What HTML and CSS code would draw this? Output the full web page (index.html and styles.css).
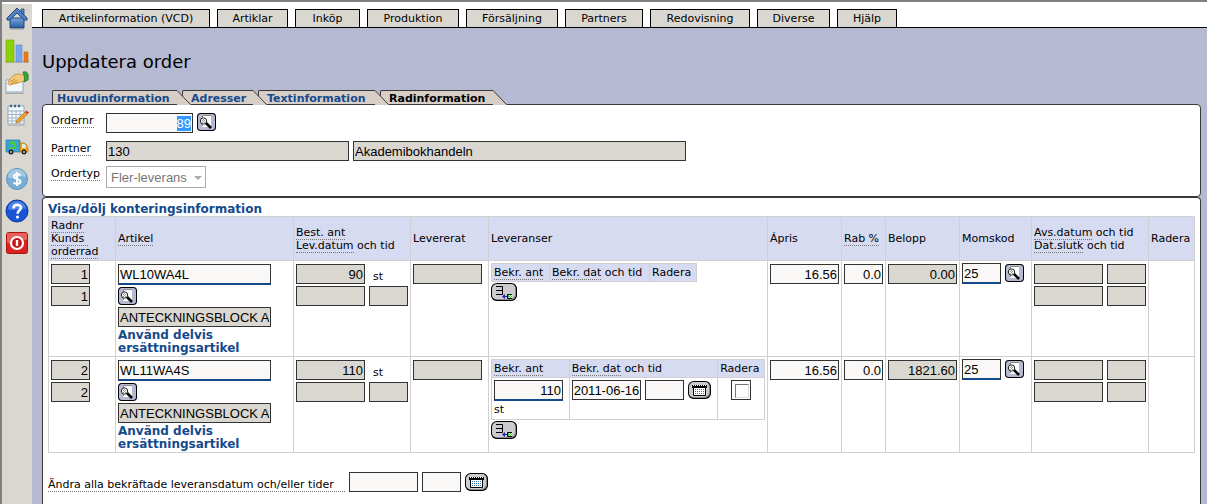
FILE: index.html
```html
<!DOCTYPE html>
<html lang="sv">
<head>
<meta charset="utf-8">
<title>Uppdatera order</title>
<link rel="stylesheet" href="styles.css">
</head>
<body>
<svg class="defs" aria-hidden="true">
  <symbol id="search" viewBox="0 0 19 18">
    <path d="M5 2h9v12H5z" fill="#fff"/><path d="M5.500 13V2.500H14" fill="none" stroke="#888"/>
    <path d="M8.500 9.500l5.500 5.500" stroke="#000" stroke-width="2.600"/>
    <circle cx="6.500" cy="8" r="3.200" fill="#f4f4f4" stroke="#222"/><path d="M5 7h1v1H5zM6 8h1v1H6zM7 7h1v1H7zM5 9h1v1H5zM7 9h1v1H7zM6 6h1v1H6z" fill="#999"/>
  </symbol>
  <symbol id="insert" viewBox="0 0 26 18">
    <path d="M5 3.500h6.500v8H5M5 7.500h6" fill="none" stroke="#000"/>
    <path d="M11 13.500l3-2.500v2h3v1h-3v2z" fill="#22b"/>
    <path d="M17 12h4v3h-4z" fill="#3c3"/><path d="M21 11.500h-4.500v4H21" fill="none" stroke="#000"/>
    <path d="M18 12h1v1h-1zM20 12h1v1h-1zM19 13h1v1h-1zM18 14h1v1h-1zM20 14h1v1h-1z" fill="#fff"/>
  </symbol>
  <symbol id="cal" viewBox="0 0 23 18">
    <path d="M5.500 6v8.500h12V6" fill="#fff" stroke="#000"/><path d="M4 4h15v3H4z" fill="#000"/>
    <path d="M5 4.500h13" stroke="#fff" stroke-dasharray="1 1"/>
    <path d="M7 8.500h9M7 10.500h9M7 12.500h9" stroke="#37a" stroke-dasharray="1 1"/>
  </symbol>
  <symbol id="slant" viewBox="0 0 14 15">
    <path d="M0 0L14 15H0z" fill="#d7cec8"/><path d="M0 .5L13.500 14.500" stroke="#3a3a3a" fill="none"/>
  </symbol>
</svg>
<div class="app">
<aside class="side">
  <a href="#" aria-label="Hem"><svg viewBox="0 0 24 24"><defs><linearGradient id="hb" x2="0" y2="1"><stop stop-color="#78a7dc"/><stop offset="1" stop-color="#285a9e"/></linearGradient></defs><path d="M5 11h14v10H5z" fill="url(#hb)" stroke="#204878"/><path d="M16 2h3v6h-3z" fill="#5c88c0" stroke="#204878" stroke-width=".8"/><path d="M12 1L2 11v2h3l7-7 7 7h3v-2z" fill="#4e82c4" stroke="#204878"/><path d="M5 22h14" stroke="#999"/></svg></a>
  <a href="#" aria-label="Statistik"><svg viewBox="0 0 24 24"><path d="M0 23h24" stroke="#999"/><path d="M1 1h8v22H1z" fill="#8ccf0b" stroke="#70aa09" stroke-width=".6"/><path d="M11 6h6v17h-6z" fill="#79a7ef" stroke="#5b87cc" stroke-width=".6"/><path d="M19 13h4v10h-4z" fill="#ef7b16" stroke="#c8600a" stroke-width=".6"/></svg></a>
  <a href="#" aria-label="Order"><svg viewBox="0 0 24 24"><path d="M1 9h17v12H1z" fill="#f3f7fc" stroke="#8ea6c0"/><path d="M0 22.500h19" stroke="#aaa"/><path d="M3 12c1-4 6-9 10-9l7 1v6l-8 2-7 2c-2 0-2-1-2-2z" fill="#f2c879" stroke="#c88c38" stroke-width=".8"/><path d="M5 11l5-3M6 13l6-4M10 13l3-2" stroke="#c88c38"/><path d="M18 1c4-1 6 1 5 8l-4 2c1-4 0-7-1-10z" fill="#35a63b" stroke="#16741d" stroke-width=".7"/></svg></a>
  <a href="#" aria-label="Planering"><svg viewBox="0 0 24 24"><path d="M3 3h16v18H3z" fill="#f6f9fd" stroke="#91a5bb"/><path d="M3 8h16M3 11.500h16M3 15h16M3 18h16M7 7v14M11 7v14M15 7v14" stroke="#a0b4cc"/><path d="M5 3h2M9 3h2M13 3h2" stroke="#366a86" stroke-width="2.500"/><path d="M12 17l8-8 2.500 2-8 8-3.500 1z" fill="#f1a326" stroke="#a06b15" stroke-width=".6"/><path d="M20 9l1.500-1.500 2.500 2-1.500 1.500z" fill="#d33827"/><path d="M3 22.500h18" stroke="#bbb"/></svg></a>
  <a href="#" aria-label="Leverans"><svg viewBox="0 0 24 24"><path d="M1 5h14v12H1z" fill="#39a3d5" stroke="#267aa8" stroke-width=".7"/><path d="M15 8h4c3 1 4 4 4 9h-8z" fill="#f4a51c" stroke="#b97509" stroke-width=".7"/><path d="M17 9h2c2 1 2 2 2 4h-4z" fill="#d7edf6"/><path d="M11 8a4 3 0 0 0-6 1M5 12a4 3 0 0 0 6 0M11 10H8" fill="none" stroke="#4cd31e" stroke-width="2"/><circle cx="6" cy="17" r="2.500" fill="#222"/><circle cx="19" cy="17" r="2.500" fill="#222"/><circle cx="6" cy="17" r="1" fill="#ccc"/><circle cx="19" cy="17" r="1" fill="#ccc"/></svg></a>
  <a href="#" aria-label="Ekonomi"><svg viewBox="0 0 24 24"><circle cx="12" cy="12" r="10.500" fill="#78aed5" stroke="#6096bd"/><path d="M3 10a9 8 0 0 1 18 0c-6-3-12 4-18 0z" fill="#a3cae4"/><path d="M15.500 8.500C14.500 7 9 6.500 9 9.500c0 3 6.500 2 6.500 5s-6 3-7 .8M12 5v14" fill="none" stroke="#fff" stroke-width="2"/></svg></a>
  <a href="#" aria-label="Hjälp"><svg viewBox="0 0 24 24"><circle cx="12" cy="12" r="11" fill="#1854d3" stroke="#0b3a9d"/><path d="M3 10a9 8 0 0 1 18 0c-6-2-12 3-18 0z" fill="#4b82e8"/><path d="M8.500 9.500c0-5 7.500-4.500 7.500-.8 0 2.500-3.500 2.800-3.500 6" fill="none" stroke="#fff" stroke-width="2.600"/><circle cx="12.500" cy="18" r="1.600" fill="#fff"/></svg></a>
  <a href="#" aria-label="Logga ut"><svg viewBox="0 0 24 24"><rect x="1.500" y="1.500" width="21" height="21" rx="2" fill="#d82320" stroke="#a91411"/><path d="M2 2h20v7c-7 0-12 4-20 3z" fill="#e9605b"/><circle cx="12" cy="12" r="6" fill="#c41512" stroke="#fff" stroke-width="2.200"/><path d="M12 9v6" stroke="#fff" stroke-width="2.400"/></svg></a>
</aside>
<main class="main">
  <nav class="menu">
    <button>Artikelinformation (VCD)</button><button>Artiklar</button><button>Inköp</button><button>Produktion</button><button>Försäljning</button><button>Partners</button><button>Redovisning</button><button>Diverse</button><button>Hjälp</button>
  </nav>
  <div class="content">
    <h1>Uppdatera order</h1>
    <div class="tabs">
      <a href="#" class="tab">Huvudinformation<svg><use href="#slant"/></svg></a>
      <a href="#" class="tab">Adresser<svg><use href="#slant"/></svg></a>
      <a href="#" class="tab">Textinformation<svg><use href="#slant"/></svg></a>
      <a href="#" class="tab current">Radinformation<svg><use href="#slant"/></svg></a>
    </div>
    <section class="panel order">
      <label for="ordernr"><span class="hint">Ordernr</span></label>
      <div class="line"><input id="ordernr" class="w-nr num" value="89" autofocus><button class="icon" aria-label="Sök order"><svg><use href="#search"/></svg></button></div>
      <label for="partner"><span class="hint">Partner</span></label>
      <div class="line"><input id="partner" class="w-partner" value="130" readonly><input class="w-name" value="Akademibokhandeln" aria-label="Partnernamn" readonly></div>
      <label for="typ"><span class="hint">Ordertyp</span></label>
      <div class="line"><div class="pick"><select id="typ" disabled><option>Fler-leverans</option></select></div></div>
    </section>
    <section class="panel rows">
      <a href="#" class="link">Visa/dölj konteringsinformation</a>
      <table class="grid">
        <colgroup><col class="c1"><col class="c2"><col class="c3"><col class="c4"><col class="c5"><col class="c6"><col class="c7"><col class="c8"><col class="c9"><col class="c10"><col class="c11"></colgroup>
        <thead><tr>
          <th><span class="hint">Radnr</span><br><span class="hint">Kunds&nbsp;</span><br><span class="hint">orderrad</span></th>
          <th><span class="hint">Artikel</span></th>
          <th><span class="hint">Best. ant</span><br><span class="hint">Lev.datum</span> och tid</th>
          <th>Levererat</th><th>Leveranser</th><th>Ápris</th>
          <th><span class="hint">Rab %</span></th><th>Belopp</th><th>Momskod</th>
          <th><span class="hint">Avs.datum</span> och tid<br><span class="hint">Dat.slutk</span> och tid</th>
          <th>Radera</th>
        </tr></thead>
        <tbody>
        <tr>
          <td><div class="stack"><input class="w-s num" value="1" aria-label="Radnr" readonly><input class="w-s num" value="1" aria-label="Kunds orderrad" readonly></div></td>
          <td><div class="stack"><input class="w-art req" value="WL10WA4L" aria-label="Artikel"><button class="icon" aria-label="Sök artikel"><svg><use href="#search"/></svg></button><input class="w-art" value="ANTECKNINGSBLOCK A4 LINJERAT" aria-label="Benämning" readonly><a href="#" class="link">Använd delvis ersättningsartikel</a></div></td>
          <td><div class="stack"><div class="line"><input class="w-d num" value="90" aria-label="Best. ant" readonly><span class="unit">st</span></div><div class="line"><input class="w-d" aria-label="Lev.datum" readonly><input class="w-s" aria-label="Lev.tid" readonly></div></div></td>
          <td><div class="stack"><input class="w-d" aria-label="Levererat" readonly></div></td>
          <td><table class="sub short"><tr><th><span class="hint">Bekr. ant</span></th><th><span class="hint">Bekr. dat</span> och tid</th><th>Radera</th></tr></table><button class="icon wide" aria-label="Lägg till leverans"><svg><use href="#insert"/></svg></button></td>
          <td><div class="stack"><input class="w-d num" value="16.56" aria-label="Ápris"></div></td>
          <td><div class="stack"><input class="w-s num" value="0.0" aria-label="Rab %"></div></td>
          <td><div class="stack"><input class="w-d num" value="0.00" aria-label="Belopp" readonly></div></td>
          <td><div class="line"><input class="w-s req" value="25" aria-label="Momskod"><button class="icon low" aria-label="Sök momskod"><svg><use href="#search"/></svg></button></div></td>
          <td><div class="stack"><div class="line"><input class="w-d" aria-label="Avs.datum" readonly><input class="w-s" aria-label="Avs.tid" readonly></div><div class="line"><input class="w-d" aria-label="Dat.slutk" readonly><input class="w-s" aria-label="Tid slutk" readonly></div></div></td>
          <td></td>
        </tr>
        <tr>
          <td><div class="stack"><input class="w-s num" value="2" aria-label="Radnr" readonly><input class="w-s num" value="2" aria-label="Kunds orderrad" readonly></div></td>
          <td><div class="stack"><input class="w-art req" value="WL11WA4S" aria-label="Artikel"><button class="icon" aria-label="Sök artikel"><svg><use href="#search"/></svg></button><input class="w-art" value="ANTECKNINGSBLOCK A4 LINJERAT" aria-label="Benämning" readonly><a href="#" class="link">Använd delvis ersättningsartikel</a></div></td>
          <td><div class="stack"><div class="line"><input class="w-d num" value="110" aria-label="Best. ant" readonly><span class="unit">st</span></div><div class="line"><input class="w-d" aria-label="Lev.datum" readonly><input class="w-s" aria-label="Lev.tid" readonly></div></div></td>
          <td><div class="stack"><input class="w-d" aria-label="Levererat" readonly></div></td>
          <td><table class="sub full"><tr><th><span class="hint">Bekr. ant</span></th><th><span class="hint">Bekr. dat</span> och tid</th><th>Radera</th></tr>
            <tr><td><input class="w-d num req" value="110" aria-label="Bekr. ant"><span class="under">st</span></td>
            <td><div class="line"><input class="w-d" value="2011-06-16" aria-label="Bekr. dat"><input class="w-s" aria-label="Bekr. tid"><button class="icon cal" aria-label="Välj datum"><svg><use href="#cal"/></svg></button></div></td>
            <td><input type="checkbox" aria-label="Radera"></td></tr></table><button class="icon wide" aria-label="Lägg till leverans"><svg><use href="#insert"/></svg></button></td>
          <td><div class="stack"><input class="w-d num" value="16.56" aria-label="Ápris"></div></td>
          <td><div class="stack"><input class="w-s num" value="0.0" aria-label="Rab %"></div></td>
          <td><div class="stack"><input class="w-d num" value="1821.60" aria-label="Belopp" readonly></div></td>
          <td><div class="line"><input class="w-s req" value="25" aria-label="Momskod"><button class="icon low" aria-label="Sök momskod"><svg><use href="#search"/></svg></button></div></td>
          <td><div class="stack"><div class="line"><input class="w-d" aria-label="Avs.datum" readonly><input class="w-s" aria-label="Avs.tid" readonly></div><div class="line"><input class="w-d" aria-label="Dat.slutk" readonly><input class="w-s" aria-label="Tid slutk" readonly></div></div></td>
          <td></td>
        </tr>
        </tbody>
      </table>
      <div class="line all"><label for="alla" class="hint">Ändra alla bekräftade leveransdatum och/eller tider</label><input id="alla" class="w-d"><input class="w-s" aria-label="Tid"><button class="icon cal" aria-label="Välj datum"><svg><use href="#cal"/></svg></button></div>
    </section>
  </div>
</main>
</div>
<script src="app.js"></script>
</body>
</html>
```

FILE: styles.css
```css
* { box-sizing: border-box; }
body {
  margin: 0;
  background: #fff;
  color: #000;
  font: 11px/13px "DejaVu Sans", Verdana, sans-serif;
}
a { text-decoration: none; }
.defs { position: absolute; width: 0; height: 0; }
.app {
  display: flex;
  min-height: 100vh;
  border-top: 2px solid;
  border-left: 2px solid;
  border-color: #808080;
}
.side {
  flex: none;
  width: 30px;
  margin-top: 2px;
  padding: 3px;
  background: #dad7d0;
  display: flex;
  flex-direction: column;
  gap: 8px;
}
.side a, .side svg { display: block; width: 24px; height: 24px; }
.main { flex: 1; min-width: 0; display: flex; flex-direction: column; }
.menu {
  display: grid;
  grid-template-columns: 168px 71px 65px 92px 92px 78px 100px 73px 60px;
  gap: 7px;
  padding: 7px 10px 0;
  border-bottom: 1px solid #000;
}
.menu button {
  height: 18px;
  padding: 0;
  border: 1px solid #000;
  border-bottom: 0;
  background: #dad7d0;
  font: inherit;
  color: #000;
}
.content {
  flex: 1;
  display: flex;
  flex-direction: column;
  padding: 23px 6px 0 10px;
  background: #b5bad2;
}
h1 { margin: 0 0 17px; font-size: 18px; line-height: 22px; font-weight: normal; }
.tabs {
  display: grid;
  grid-template-columns: 125px 71px 117px 113px;
  gap: 5px;
  padding-left: 10px;
}
.tab {
  position: relative;
  height: 14px;
  padding: 1px 0 0 8px;
  border: solid #3a3a3a;
  border-width: 1px 0 0 1px;
  border-top-left-radius: 2px;
  background: #d7cec8;
  color: #144a8c;
  font-weight: bold;
}
.tab:nth-child(1) { z-index: 4; padding-left: 4px; }
.tab:nth-child(2) { z-index: 3; }
.tab:nth-child(3) { z-index: 2; }
.tab svg { position: absolute; left: 100%; top: -1px; width: 14px; height: 15px; }
.current { color: #000; }
.panel {
  background: #fff;
  border: 1px solid #3a3a3a;
  border-radius: 4px;
}
.order {
  display: grid;
  grid-template-columns: 55px 1fr;
  row-gap: 5px;
  padding: 8px;
}
.order label { padding-top: 1px; }
.order .line { min-height: 20px; }
.order .line:nth-of-type(1) { margin-bottom: 3px; }
.rows {
  flex: 1;
  padding: 5px 5px 12px;
  border-bottom: 0;
  border-radius: 4px 4px 0 0;
}
.hint { border-bottom: 1px dotted #777; }
.link { display: block; color: #144a8c; font-size: 12px; font-weight: bold; }
.line { display: flex; align-items: flex-start; gap: 4px; }
.stack { display: flex; flex-direction: column; align-items: flex-start; gap: 2px; padding-top: 1px; }
.unit { padding: 6px 4px 0; }
.under { display: block; padding: 2px 0 1px; }

input, select {
  display: block;
  height: 20px;
  margin: 0;
  padding: 0 1px;
  border: 1px solid #333;
  border-radius: 0;
  background: #f9f8f6;
  color: #000;
  font: 13px "Liberation Sans", Arial, sans-serif;
  outline: 0;
}
input::selection { background: #3399ff; color: #fff; }
input[readonly] { background: #dad7d0; }
.num { text-align: right; }
.req { height: 21px; border-bottom: 2px solid #144a8c; }
.w-s { width: 39px; }
.w-d { width: 69px; }
.w-art { width: 153px; }
.w-nr { width: 87px; }
.w-partner { width: 243px; }
.w-name { width: 333px; }
.pick { position: relative; }
.pick select {
  appearance: none;
  width: 100px;
  height: 22px;
  padding-left: 4px;
  border-color: #aaa;
  background: #fff;
  color: #777;
  opacity: 1;
}
.pick::after {
  content: "";
  position: absolute;
  right: 4px;
  top: 10px;
  border: 4px solid transparent;
  border-top-color: #aaa;
}
input[type="checkbox"] {
  appearance: none;
  width: 20px;
  height: 20px;
  margin: 0 auto;
  padding: 4px;
  background: #fff;
}
input[type="checkbox"]::before {
  content: "";
  display: block;
  width: 12px;
  height: 12px;
  margin: -1px;
  border: 1px solid #777;
  border-right-color: #ddd;
  border-bottom-color: #ddd;
}
input[type="checkbox"]:checked::before { background: #144a8c; }

.icon {
  display: block;
  width: 19px;
  height: 18px;
  padding: 0;
  border: 0;
  border-radius: 4px;
  background: #b5bad2;
  box-shadow: inset 0 0 0 1px #000;
}
.icon svg { display: block; width: 100%; height: 100%; }
.low { margin-top: 1px; }
.wide { width: 26px; margin-top: 1px; }
.cal { width: 23px; margin-top: 1px; }
.wide, .cal {
  border-radius: 6px;
  background: #ccccd0;
  box-shadow: inset 0 0 0 1px #000, inset -1px -1px 0 1px #888;
}

table { border-collapse: collapse; }
th, td { border: 1px solid #d0d0d0; padding: 2px; text-align: left; vertical-align: top; }
th { background: #d6dbf1; font-weight: normal; vertical-align: middle; white-space: nowrap; }
.grid { width: 100%; table-layout: fixed; }
.grid > thead th { height: 44px; }
.grid > tbody > tr { height: 96px; }
.grid > tbody > tr > td { padding-bottom: 1px; }
.c1 { width: 67px; }
.c2 { width: 178px; }
.c3, .c10 { width: 117px; }
.c4 { width: 78px; }
.c5 { width: 279px; }
.c6, .c8 { width: 74px; }
.c7 { width: 44px; }
.c9 { width: 72px; }
.c11 { width: 46px; }
.short th:nth-child(1) { width: 58px; }
.short th:nth-child(2) { width: 100px; }
.short th:nth-child(3) { width: 47px; }
.full th:nth-child(1) { width: 78px; }
.full th:nth-child(2) { width: 149px; }
.full th:nth-child(3) { width: 47px; }
.all { margin-top: 19px; }
.all label { min-width: 297px; margin-top: 6px; }
```

FILE: app.js
```js
const orderNumber = document.getElementById("ordernr");
orderNumber.focus();
orderNumber.select();
```
